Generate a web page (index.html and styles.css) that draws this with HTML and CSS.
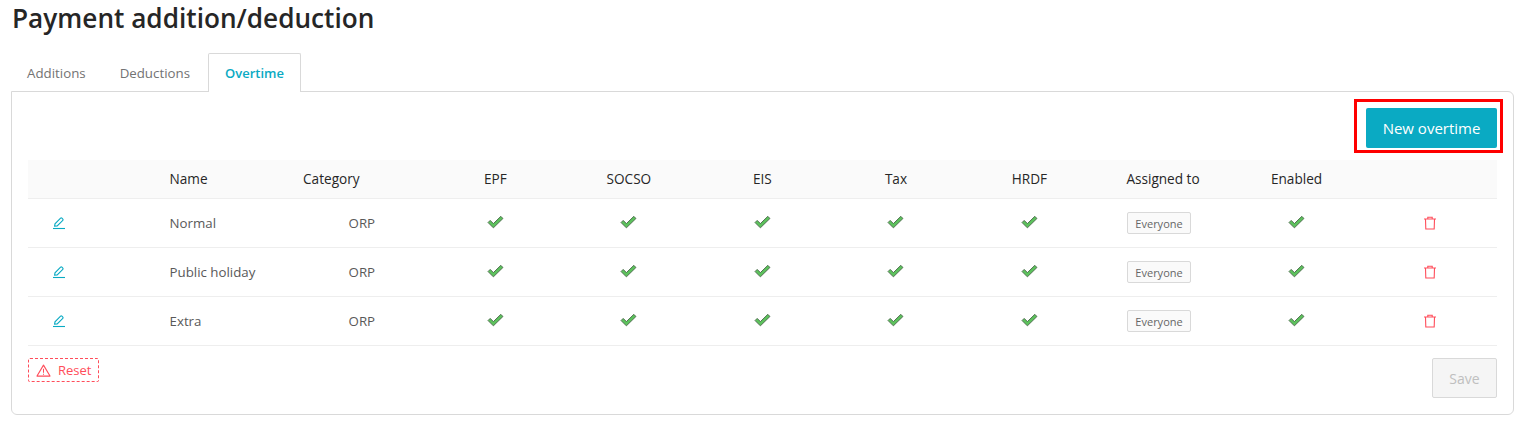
FILE: index.html
```html
<!DOCTYPE html>
<html lang="en">
<head>
  <meta charset="UTF-8" />
  <title>Payment addition/deduction</title>
  <link rel="stylesheet" href="styles.css">
</head>
<body>
  <svg class="defs" width="0" height="0">
    <symbol id="i-check" viewBox="0 0 16 13">
      <path d="M1 7 3 5 6 8 13 1.200 15 3.200 6 12Z" fill="#5cc25c" stroke="#4d6b4d" stroke-width=".9" stroke-linejoin="round"/>
    </symbol>
    <symbol id="i-edit" viewBox="0 0 14 14">
      <path d="M2.600 10.200 3 7.800 8.600 2.200a.9.9 0 0 1 1.300 0l.9.9a.9.9 0 0 1 0 1.300L5.200 9.900Z" fill="none" stroke="currentColor" stroke-width="1.100"/>
      <path d="M1 12.500h12" stroke="currentColor" stroke-width="1.100"/>
    </symbol>
    <symbol id="i-trash" viewBox="0 0 14 14">
      <path d="M1 3h12M4.800 3V1.200h4.400V3M2.500 3l.3 10h8.400l.3-10" fill="none" stroke="currentColor" stroke-width="1.100"/>
    </symbol>
  </svg>

  <h1 class="title">Payment addition/deduction</h1>

  <div class="tabs">
    <div class="tab">Additions</div>
    <div class="tab">Deductions</div>
    <div class="tab active">Overtime</div>
  </div>

  <div class="panel">
    <div class="toolbar">
      <button class="btn-primary">New overtime</button>
      <div class="marker"></div>
    </div>

    <table class="grid">
      <thead>
        <tr>
          <th></th>
          <th class="left">Name</th>
          <th class="left">Category</th>
          <th>EPF</th>
          <th>SOCSO</th>
          <th>EIS</th>
          <th>Tax</th>
          <th>HRDF</th>
          <th>Assigned to</th>
          <th>Enabled</th>
          <th></th>
        </tr>
      </thead>
      <tbody>
        <tr>
          <td class="edit"><svg class="ico"><use href="#i-edit"/></svg></td>
          <td class="left">Normal</td>
          <td>ORP</td>
          <td><svg class="tick"><use href="#i-check"/></svg></td>
          <td><svg class="tick"><use href="#i-check"/></svg></td>
          <td><svg class="tick"><use href="#i-check"/></svg></td>
          <td><svg class="tick"><use href="#i-check"/></svg></td>
          <td><svg class="tick"><use href="#i-check"/></svg></td>
          <td><span class="tag">Everyone</span></td>
          <td><svg class="tick"><use href="#i-check"/></svg></td>
          <td class="del"><svg class="ico"><use href="#i-trash"/></svg></td>
        </tr>
        <tr>
          <td class="edit"><svg class="ico"><use href="#i-edit"/></svg></td>
          <td class="left">Public holiday</td>
          <td>ORP</td>
          <td><svg class="tick"><use href="#i-check"/></svg></td>
          <td><svg class="tick"><use href="#i-check"/></svg></td>
          <td><svg class="tick"><use href="#i-check"/></svg></td>
          <td><svg class="tick"><use href="#i-check"/></svg></td>
          <td><svg class="tick"><use href="#i-check"/></svg></td>
          <td><span class="tag">Everyone</span></td>
          <td><svg class="tick"><use href="#i-check"/></svg></td>
          <td class="del"><svg class="ico"><use href="#i-trash"/></svg></td>
        </tr>
        <tr>
          <td class="edit"><svg class="ico"><use href="#i-edit"/></svg></td>
          <td class="left">Extra</td>
          <td>ORP</td>
          <td><svg class="tick"><use href="#i-check"/></svg></td>
          <td><svg class="tick"><use href="#i-check"/></svg></td>
          <td><svg class="tick"><use href="#i-check"/></svg></td>
          <td><svg class="tick"><use href="#i-check"/></svg></td>
          <td><svg class="tick"><use href="#i-check"/></svg></td>
          <td><span class="tag">Everyone</span></td>
          <td><svg class="tick"><use href="#i-check"/></svg></td>
          <td class="del"><svg class="ico"><use href="#i-trash"/></svg></td>
        </tr>
      </tbody>
    </table>

    <div class="footer">
      <button class="btn-reset">
        <svg class="warn" viewBox="0 0 16 14"><path d="M8 1.200 15 13H1Z" fill="none" stroke="currentColor" stroke-width="1.200" stroke-linejoin="round"/><path d="M8 5v4.500M8 10.500v1.200" stroke="currentColor" stroke-width="1.100"/></svg>
        Reset
      </button>
      <button class="btn-save" disabled>Save</button>
    </div>
  </div>
</body>
</html>
```

FILE: styles.css
```css
body {
  font-family: "Open Sans", "Noto Sans", Arial, sans-serif;
  font-size: 13.3px;
  margin: 0;
  padding: 0 12px 0 11px;
  background: #fff;
  color: #595959;
}
.defs {
  position: absolute;
}
.title {
  margin: 0;
  padding-left: 1px;
  height: 53px;
  font-size: 26.2px;
  font-weight: 600;
  line-height: 37px;
  color: #262626;
}
.tabs {
  display: flex;
  height: 39px;
  margin-left: -1px;
  margin-bottom: -1px;
}
.tab {
  padding: 0 17px;
  font-size: 13.3px;
  line-height: 40px;
  color: #737373;
}
.tab.active {
  position: relative;
  margin-left: 1px;
  padding: 0 16px;
  background: #fff;
  border: 1px solid #d9d9d9;
  border-bottom: 0;
  border-radius: 2px 2px 0 0;
  font-size: 13px;
  line-height: 38px;
  color: #0aaac3;
  font-weight: 600;
}
.panel {
  box-sizing: border-box;
  height: 324px;
  padding: 16px;
  border: 1px solid #d9d9d9;
  border-radius: 0 6px 6px 6px;
}
.toolbar {
  position: relative;
  display: flex;
  justify-content: flex-end;
  margin-bottom: 12px;
}
.btn-primary {
  width: 131px;
  height: 40px;
  padding: 0;
  font: inherit;
  font-size: 15px;
  color: #fff;
  background: #0aaac3;
  border: 0;
  border-radius: 2px;
}
.marker {
  position: absolute;
  top: -9px;
  right: -6px;
  width: 149px;
  height: 54px;
  box-sizing: border-box;
  border: 3px solid #f00;
}
.grid {
  width: 100%;
  table-layout: fixed;
  border-collapse: collapse;
}
.grid th {
  height: 36px;
  padding: 0 8px 2px;
  background: #fafafa;
  border-bottom: 1px solid #eee;
  font-size: 13.6px;
  font-weight: 500;
  color: #262626;
  text-align: center;
}
.grid td {
  height: 48px;
  padding: 0 8px;
  border-bottom: 1px solid #eee;
  text-align: center;
}
.grid th.left,
.grid td.left {
  text-align: left;
}
.grid td.edit {
  padding-left: 24px;
  text-align: left;
  color: #0aaac3;
}
.grid td.del {
  color: #ff4d5a;
}
.ico {
  display: inline-block;
  width: 14px;
  height: 14px;
  vertical-align: middle;
  margin-bottom: 2px;
}
.tick {
  display: inline-block;
  width: 17px;
  height: 14px;
  vertical-align: middle;
  margin-bottom: 3px;
}
.tag {
  display: inline-block;
  margin-right: 8px;
  padding: 1px 7px 0;
  font-size: 11px;
  line-height: 19px;
  color: #666;
  background: #fafafa;
  border: 1px solid #d9d9d9;
  border-radius: 2px;
}
.footer {
  display: flex;
  justify-content: space-between;
  align-items: flex-start;
  margin-top: 12px;
}
.btn-reset {
  display: flex;
  align-items: center;
  gap: 7px;
  height: 24px;
  padding: 0 7px;
  font: inherit;
  font-size: 13px;
  color: #ff4d5a;
  background: #fff;
  border: 1px dashed #ff4d5a;
  border-radius: 2px;
}
.warn {
  width: 15px;
  height: 13px;
}
.btn-save {
  width: 65px;
  height: 40px;
  padding: 0;
  font: inherit;
  font-size: 14px;
  color: #bfbfbf;
  background: #f5f5f5;
  border: 1px solid #d9d9d9;
  border-radius: 2px;
}
```
